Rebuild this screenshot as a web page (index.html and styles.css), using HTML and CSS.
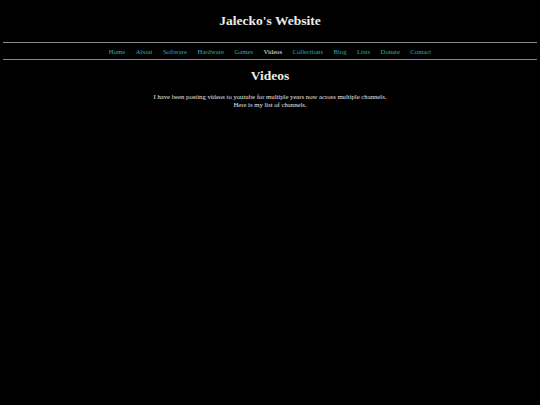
FILE: index.html
```html
<!DOCTYPE html>
<html>
<head>
<meta charset="utf-8">
<link rel="stylesheet" href="styles.css">
</head>
<body>
<header class="site-header">
  <h1 class="site-title">Jalecko's Website</h1>
</header>
<nav class="nav">
  <a href="#">Home</a>
  <a href="#">About</a>
  <a href="#">Software</a>
  <a href="#">Hardware</a>
  <a href="#">Games</a>
  <span class="current">Videos</span>
  <a href="#">Collections</a>
  <a href="#">Blog</a>
  <a href="#">Lists</a>
  <a href="#">Donate</a>
  <a href="#">Contact</a>
</nav>
<main class="content">
  <h2 class="page-title">Videos</h2>
  <p class="intro">I have been posting videos to youtube for multiple years now across multiple channels.<br>Here is my list of channels.</p>
</main>
</body>
</html>
```
FILE: styles.css
```css
html, body {
  margin: 0;
  padding: 0;
  background: #000;
}
body {
  color: #e6e6e6;
  font-family: "Liberation Serif", "Times New Roman", serif;
  padding: 0 3px;
}
.site-header {
  padding-top: 13px;
  height: 43px;
  box-sizing: border-box;
  border-bottom: 1px solid #8a8a8a;
}
.site-title {
  margin: 0;
  text-align: center;
  font-size: 13.5px;
  line-height: 16px;
  font-weight: bold;
  color: #ececec;
}
.nav {
  display: flex;
  justify-content: center;
  gap: 10.5px;
  height: 16px;
  align-items: center;
  border-bottom: 1px solid #8a8a8a;
  font-size: 6.7px;
}
.nav a {
  color: #1fb3b3;
  text-decoration: none;
}
.nav .current {
  color: #e6e6e6;
}
.content {
  text-align: center;
}
.page-title {
  margin: 8px 0 0;
  font-size: 13.5px;
  line-height: 16px;
  font-weight: bold;
  color: #ececec;
}
.intro {
  margin: 9px 0 0;
  font-size: 6.7px;
  line-height: 7.5px;
}
```
